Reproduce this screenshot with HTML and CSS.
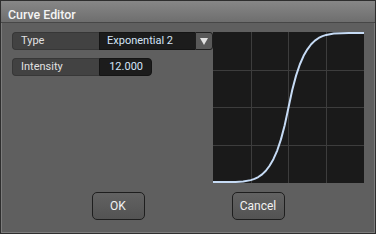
FILE: index.html
```html
<!DOCTYPE html>
<html>
<head>
<meta charset="utf-8">
<link rel="stylesheet" href="styles.css">
</head>
<body>
<div class="win">
  <div class="title">Curve Editor</div>
  <div class="content">
    <div class="main">
      <div class="form">
        <div class="row">
          <div class="label">Type</div>
          <div class="value select">Exponential 2</div>
          <div class="drop"><svg width="8" height="7" viewBox="0 0 8 7"><polygon points="0,0 8,0 4,7" fill="#e2e2e2"/></svg></div>
        </div>
        <div class="row">
          <div class="label">Intensity</div>
          <div class="value num">12.000</div>
        </div>
      </div>
      <div class="graph">
        <svg width="151" height="151" viewBox="0 0 151 151">
          <g stroke="#3d3d3d" stroke-width="1">
            <line x1="38.5" y1="0" x2="38.5" y2="151"/>
            <line x1="75.5" y1="0" x2="75.5" y2="151"/>
            <line x1="113.5" y1="0" x2="113.5" y2="151"/>
            <line x1="0" y1="38.5" x2="151" y2="38.5"/>
            <line x1="0" y1="75.5" x2="151" y2="75.5"/>
            <line x1="0" y1="113.5" x2="151" y2="113.5"/>
          </g>
          <g transform="translate(0,1) scale(1,0.9868)">
            <polyline fill="none" stroke="#c6dbf5" stroke-width="2" vector-effect="non-scaling-stroke" stroke-linejoin="round"
              points="0,151 7.55,151 15.1,150.98 22.65,150.87 30.2,150.41 37.75,149.08 41.5,147.83 45.3,145.96 49.1,143.3 52.85,139.6 56.6,134.5 60.4,127.9 64.2,119.1 67.95,107.8 71.7,93.5 75.5,75.5 79.3,57.5 83.05,43.2 86.8,31.9 90.6,23.1 94.4,16.5 98.15,11.4 101.9,7.7 105.7,5.04 109.5,3.17 113.25,1.92 120.8,0.59 128.35,0.13 135.9,0.02 143.45,0 151,0"/>
          </g>
        </svg>
      </div>
    </div>
    <div class="buttons">
      <div class="btn">OK</div>
      <div class="btn">Cancel</div>
    </div>
  </div>
</div>
</body>
</html>
```
FILE: styles.css
```css
html, body {
  margin: 0;
  padding: 0;
  background: #5f5f5f;
}
.win {
  width: 376px;
  height: 234px;
  box-sizing: border-box;
  border: 1px solid #2e2e2e;
  background: #5f5f5f;
  box-shadow: inset 0 0 0 1px #7c7c7c;
  font-family: Roboto, "Liberation Sans", sans-serif;
  overflow: hidden;
}
.title {
  height: 22px;
  box-sizing: border-box;
  padding: 6px 0 0 7px;
  line-height: 15px;
  font-size: 12.4px;
  font-weight: 500;
  color: #f4f4f4;
  background: linear-gradient(#878787, #6e6e6e);
  border-bottom: 1px solid #474747;
}
.content {
  padding: 9px 0 0 11px;
}
.main {
  display: flex;
  align-items: flex-start;
}
.form {
  width: 201px;
  display: flex;
  flex-direction: column;
  gap: 8px;
}
.row {
  display: flex;
  height: 18px;
  font-size: 11px;
  line-height: 18px;
}
.label {
  width: 87px;
  box-sizing: border-box;
  padding-left: 8px;
  background: #424242;
  border: 1px solid #373737;
  border-right: none;
  border-radius: 4px 0 0 4px;
  color: #e0e0e0;
  line-height: 16px;
}
.value {
  box-sizing: border-box;
  background: #1c1c1c;
  color: #d4e4f7;
  border: 1px solid #141414;
  line-height: 16px;
}
.select {
  width: 96px;
  padding-left: 7px;
  border-right: none;
}
.num {
  width: 53px;
  text-align: right;
  padding-right: 8px;
  border-radius: 0 4px 4px 0;
}
.drop {
  width: 18px;
  box-sizing: border-box;
  background: #595959;
  border: 1px solid #1e1e1e;
  border-radius: 0 3px 3px 0;
  display: flex;
  align-items: center;
  justify-content: center;
}
.drop svg {
  display: block;
}
.graph {
  width: 151px;
  height: 151px;
  background: #1a1a1a;
}
.graph svg {
  display: block;
}
.buttons {
  display: flex;
  justify-content: center;
  gap: 87px;
  margin-top: 9px;
  margin-left: -11px;
}
.btn {
  width: 53px;
  height: 28px;
  box-sizing: border-box;
  border: 1px solid #1e1e1e;
  border-radius: 5px;
  background: linear-gradient(#626262, #535353);
  color: #f2f2f2;
  font-size: 12px;
  line-height: 26px;
  text-align: center;
}
```
